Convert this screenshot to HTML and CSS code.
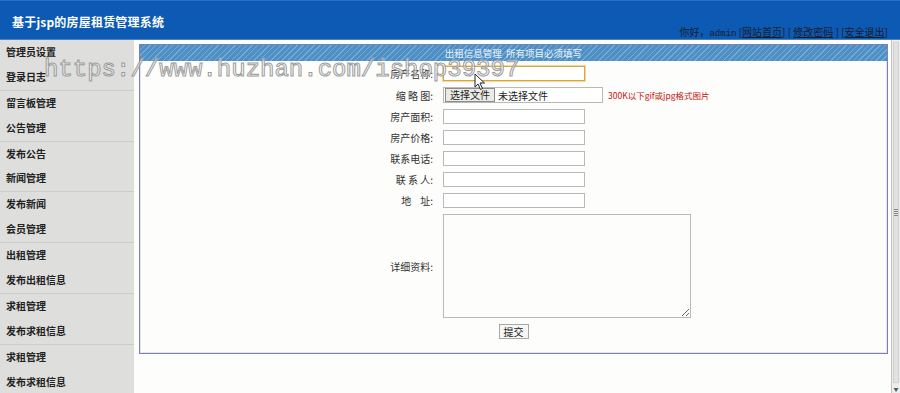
FILE: index.html
```html
<!DOCTYPE html>
<html lang="zh-CN">
<head>
    <meta charset="UTF-8">
    <meta name="viewport" content="width=device-width, initial-scale=1.0">
    <title>基于jsp的房屋租赁管理系统</title>
    <link rel="stylesheet" href="styles.css">
</head>
<body>
    <div class="top">
        <div class="top-title">基于jsp的房屋租赁管理系统</div>
        <div class="top-user">你好，<span class="uname">admin</span> [<a href="#">网站首页</a>] [ <a href="#">修改密码</a> ] [<a href="#">安全退出</a>]</div>
    </div>

    <div class="layout">
        <div class="menu">
            <div class="menu-group">
                <div class="menu-item">管理员设置</div>
                <div class="menu-item">登录日志</div>
            </div>
            <div class="menu-group">
                <div class="menu-item">留言板管理</div>
                <div class="menu-item">公告管理</div>
            </div>
            <div class="menu-group">
                <div class="menu-item">发布公告</div>
                <div class="menu-item">新闻管理</div>
            </div>
            <div class="menu-group">
                <div class="menu-item">发布新闻</div>
                <div class="menu-item">会员管理</div>
            </div>
            <div class="menu-group">
                <div class="menu-item">出租管理</div>
                <div class="menu-item">发布出租信息</div>
            </div>
            <div class="menu-group">
                <div class="menu-item">求租管理</div>
                <div class="menu-item">发布求租信息</div>
            </div>
            <div class="menu-group">
                <div class="menu-item">求租管理</div>
                <div class="menu-item">发布求租信息</div>
            </div>
        </div>

        <div class="main">
            <div class="panel">
                <div class="panel-head">出租信息管理&nbsp;&nbsp;所有项目必须填写</div>
                <form class="form">
                    <div class="row">
                        <label class="lbl">房产名称:</label>
                        <input type="text" class="txt txt-focus">
                    </div>
                    <div class="row">
                        <label class="lbl">缩 略 图:</label>
                        <span class="file">
                            <span class="file-btn">选择文件</span>
                            <span class="file-name">未选择文件</span>
                        </span>
                        <span class="tip">300K以下gif或jpg格式图片</span>
                    </div>
                    <div class="row">
                        <label class="lbl">房产面积:</label>
                        <input type="text" class="txt">
                    </div>
                    <div class="row">
                        <label class="lbl">房产价格:</label>
                        <input type="text" class="txt">
                    </div>
                    <div class="row">
                        <label class="lbl">联系电话:</label>
                        <input type="text" class="txt">
                    </div>
                    <div class="row">
                        <label class="lbl">联 系 人:</label>
                        <input type="text" class="txt">
                    </div>
                    <div class="row">
                        <label class="lbl">地&nbsp;&nbsp;&nbsp;&nbsp;址:</label>
                        <input type="text" class="txt">
                    </div>
                    <div class="row row-area">
                        <label class="lbl">详细资料:</label>
                        <textarea class="area"></textarea>
                    </div>
                    <div class="row-btn">
                        <button type="button" class="btn">提交</button>
                    </div>
                </form>
            </div>
        </div>

        <div class="scroll">
            <div class="scroll-thumb"><span class="grip"></span></div>
            <div class="scroll-arrow">▼</div>
        </div>
    </div>

    <div class="mark">https://www.huzhan.com/ishop39397</div>
    <svg class="cursor" width="12" height="18" viewBox="0 0 12 18">
        <path d="M1 1 L1 14 L4 11 L6.5 16.5 L8.5 15.5 L6 10 L10.5 10 Z" fill="#fff" stroke="#222" stroke-width="1"/>
    </svg>
</body>
</html>
```

FILE: styles.css
```css
body {
    margin: 0;
    font-family: "Noto Sans CJK SC", "Liberation Sans", sans-serif;
    font-size: 10px;
    color: #333;
    background: #fdfdfb;
    overflow: hidden;
}
.top {
    height: 38px;
    background: #0c5ab3;
    border-top: 1px solid #2a70c2;
    border-bottom: 1px solid #4d7fbf;
    display: flex;
    justify-content: space-between;
    align-items: flex-start;
    color: #fff;
}
.top-title {
    margin: 12px 0 0 12px;
    font-size: 12px;
    font-weight: bold;
    letter-spacing: 0.2px;
}
.top-user {
    margin: 23px 12px 0 0;
    font-size: 10px;
    color: #1b1b2b;
}
.top-user a {
    color: #1b1b2b;
}
.uname {
    font-family: "Liberation Mono", monospace;
    font-size: 9px;
}
.layout {
    display: flex;
    height: calc(100vh - 40px);
}
.menu {
    width: 134px;
    background: #dededc;
    border-right: 1px solid #fafafa;
    flex-shrink: 0;
}
.menu-group {
    border-bottom: 1px solid #cdcdcb;
}
.menu-item {
    height: 24.9px;
    line-height: 24.9px;
    padding-left: 6px;
    font-size: 10px;
    font-weight: bold;
    color: #222;
}
.main {
    flex: 1;
    padding: 4px 3px 0 4px;
    background: #fdfdfb;
}
.panel {
    height: 310px;
    box-sizing: border-box;
    border: 1px solid #7c80b2;
    box-shadow: inset 0 0 0 1px #e4e4ee;
}
.panel-head {
    height: 16px;
    line-height: 16px;
    text-align: center;
    font-size: 9.5px;
    color: #eaf2fa;
    background: repeating-linear-gradient(135deg, #4f90c4 0 3px, #72abd8 3px 4px);
}
.form {
    padding-top: 5px;
}
.row {
    display: flex;
    align-items: center;
    margin-bottom: 6px;
}
.lbl {
    width: 293px;
    margin-right: 10px;
    text-align: right;
    flex-shrink: 0;
}
.txt {
    width: 142px;
    height: 15px;
    box-sizing: border-box;
    border: 1px solid #b9b9b9;
    background: #fff;
    padding: 0 2px;
    margin: 0;
}
.txt-focus {
    border-color: #dba73a;
    box-shadow: 0 0 0 1px #f0d8a0;
}
.file {
    width: 160px;
    height: 16px;
    box-sizing: border-box;
    border: 1px solid #b9b9b9;
    background: #fff;
    display: flex;
    align-items: center;
    font-size: 10px;
    color: #222;
}
.file-btn {
    height: 12px;
    line-height: 12px;
    padding: 0 4px;
    margin: 0 3px 0 1px;
    border: 1px solid #8c8c8c;
    background: #eceae6;
}
.tip {
    margin-left: 5px;
    font-size: 8.5px;
    color: #c8120c;
}
.row-area {
    margin-top: 2px;
}
.area {
    width: 248px;
    height: 104px;
    box-sizing: border-box;
    border: 1px solid #b9b9b9;
    background: #fdfdfb;
    margin: 0;
}
.row-btn {
    display: flex;
    justify-content: center;
}
.btn {
    height: 15px;
    padding: 0 4px;
    font-family: "Noto Sans CJK SC", sans-serif;
    font-size: 10px;
    line-height: 12px;
    color: #222;
    background: #f6f6f4;
    border: 1px solid #a8a8a8;
}
.scroll {
    width: 8px;
    border-left: 1px solid #c4c4c4;
    background: #ededed;
    display: flex;
    flex-direction: column;
    justify-content: space-between;
    flex-shrink: 0;
}
.scroll-thumb {
    flex: 1;
    margin: 2px 1px;
    background: #e2e2e2;
    border: 1px solid #d0d0d0;
    display: flex;
    align-items: center;
    justify-content: center;
}
.grip {
    width: 4px;
    height: 8px;
    background: repeating-linear-gradient(#888 0 1px, transparent 1px 2px);
}
.scroll-arrow {
    font-size: 5px;
    line-height: 8px;
    text-align: center;
    color: #555;
}
.mark {
    position: absolute;
    left: 44px;
    top: 56px;
    font-family: "Liberation Mono", monospace;
    font-size: 24px;
    color: rgba(255, 255, 255, 0.55);
    -webkit-text-stroke: 1px #9c9c9c;
    pointer-events: none;
    white-space: nowrap;
}
.cursor {
    position: absolute;
    left: 474px;
    top: 73px;
}
```
